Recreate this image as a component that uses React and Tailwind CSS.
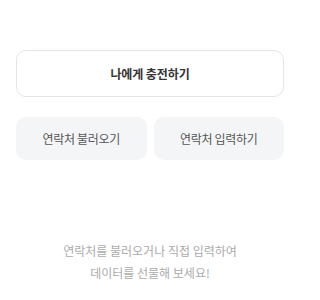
const font = { fontFamily: '"Noto Sans CJK KR", "Noto Sans", sans-serif' };

export default function App() {
  return (
    <div className="w-[300px] h-[300px] bg-white px-4 overflow-hidden" style={font}>
      <button className="mt-[50px] w-full h-[47px] rounded-[10px] border border-[#e3e4e6] bg-white text-[12px] font-semibold tracking-[-0.1px] text-[#333333] flex items-center justify-center">
        나에게 충전하기
      </button>

      <div className="mt-[20px] grid grid-cols-2 gap-[7px]">
        <button className="h-[43px] rounded-[10px] bg-[#f4f5f7] text-[12px] tracking-[-0.3px] text-[#555555] flex items-center justify-center">
          연락처 불러오기
        </button>
        <button className="h-[43px] rounded-[10px] bg-[#f4f5f7] text-[12px] tracking-[-0.3px] text-[#555555] flex items-center justify-center">
          연락처 입력하기
        </button>
      </div>

      <p className="mt-[80px] text-center text-[12px] leading-[22px] text-[#ababab]">
        연락처를 불러오거나 직접 입력하여
        <br />
        데이터를 선물해 보세요!
      </p>
    </div>
  );
}
